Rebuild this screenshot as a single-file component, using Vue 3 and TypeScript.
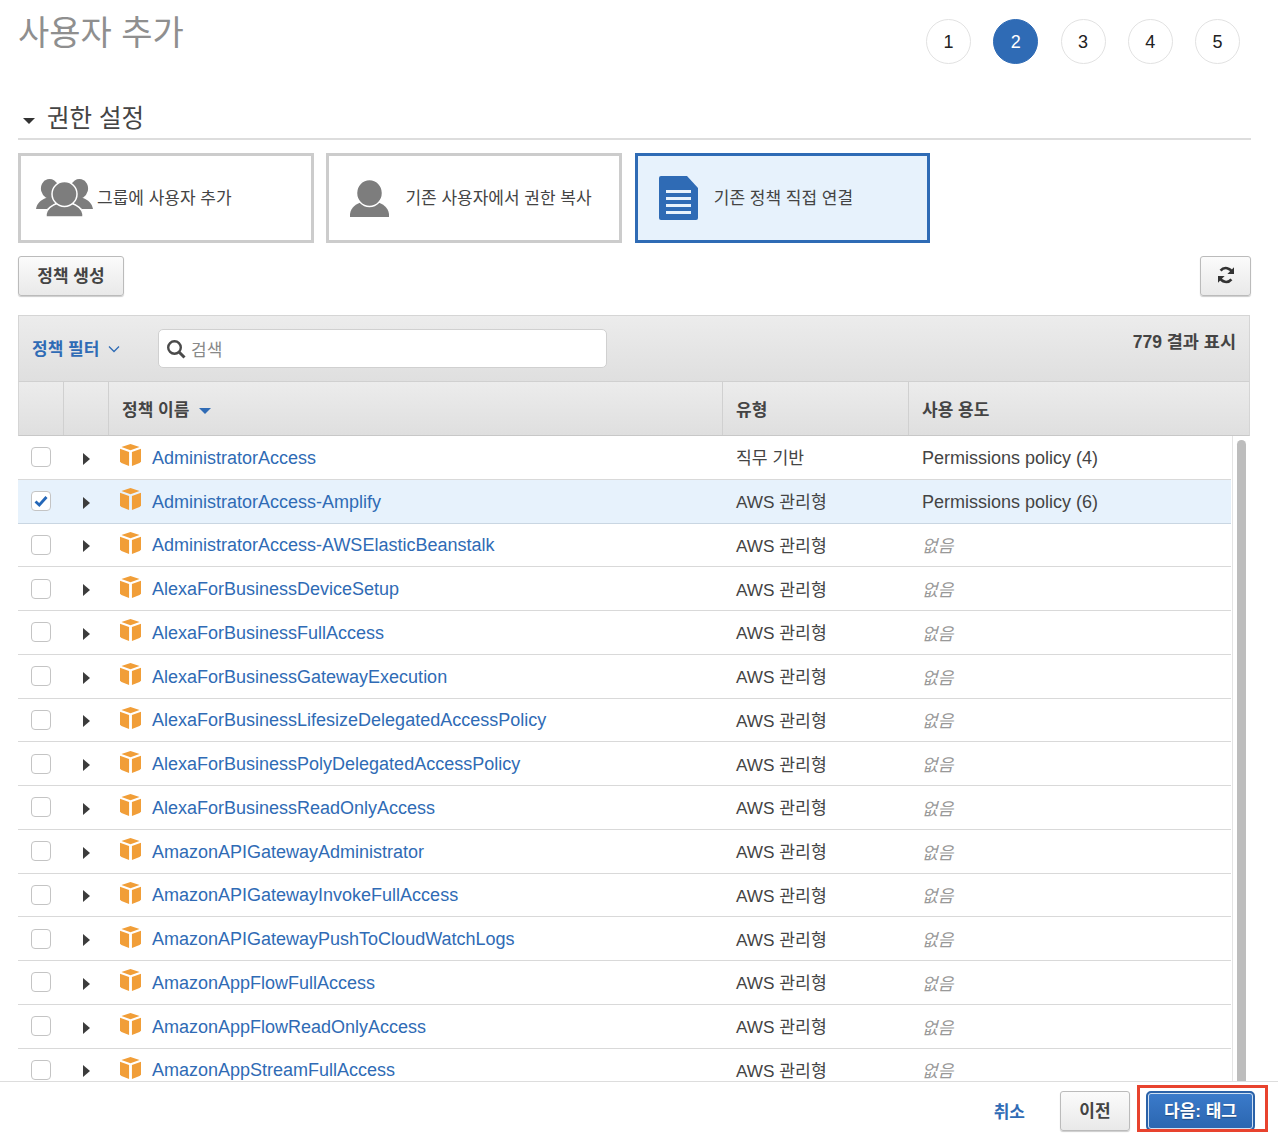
<template>
  <div class="page">
    <div class="top">
      <h1 class="title">사용자 추가</h1>
      <div class="steps">
        <div v-for="n in 5" :key="n" class="step" :class="{ active: n === 2 }">{{ n }}</div>
      </div>
    </div>

    <div class="section-head">
      <span class="caret"></span>
      <span>권한 설정</span>
    </div>

    <div class="cards">
      <div class="card">
        <svg class="icon-group" viewBox="0 0 57 38" width="57" height="38">
          <g fill="#7d7d7d">
            <ellipse cx="14" cy="10" rx="9" ry="10" transform="rotate(-15 14 10)" />
            <ellipse cx="43" cy="10" rx="9" ry="10" transform="rotate(15 43 10)" />
            <path d="M0 30c1-6 5-9 10-11h9v8c-4 1-7 2-8 3z" />
            <path d="M57 30c-1-6-5-9-10-11h-9v8c4 1 7 2 8 3z" />
          </g>
          <g fill="#7d7d7d" stroke="#fff" stroke-width="1.5">
            <path d="M10 38c0-1 0-2 0-3 1-6 6-9 12-11h13c6 2 11 5 12 11 0 1 0 2 0 3z" />
            <ellipse cx="28.5" cy="15" rx="12.5" ry="12.500" />
          </g>
        </svg>
        <span class="card-label tight">그룹에 사용자 추가</span>
      </div>
      <div class="card">
        <svg class="icon-user" viewBox="0 0 39 37" width="39" height="37">
          <path d="M0 37v-3c1-7 6-10 12-12h15c6 2 11 5 12 12v3z" fill="#7d7d7d" />
          <ellipse cx="19.500" cy="13" rx="13" ry="13.500" fill="#7d7d7d" stroke="#fff" stroke-width="1.500" />
        </svg>
        <span class="card-label">기존 사용자에서 권한 복사</span>
      </div>
      <div class="card selected">
        <svg class="icon-doc" viewBox="0 0 39 44" width="39" height="44">
          <path d="M2 0h26l11 12v30a2 2 0 0 1-2 2H2a2 2 0 0 1-2-2V2a2 2 0 0 1 2-2z" fill="#2f6bb5" />
          <g fill="#e8f2fc">
            <rect x="7" y="14" width="25" height="3" />
            <rect x="7" y="21" width="25" height="3" />
            <rect x="7" y="28" width="25" height="3" />
            <rect x="7" y="35" width="25" height="3" />
          </g>
        </svg>
        <span class="card-label">기존 정책 직접 연결</span>
      </div>
    </div>

    <div class="actions">
      <button class="btn create">정책 생성</button>
      <button class="btn refresh" aria-label="새로 고침">
        <svg viewBox="0 0 20 20" width="20" height="20">
          <path d="M16.300 7.600A6.800 6.800 0 0 0 4.600 5.600" fill="none" stroke="#333" stroke-width="2.600" />
          <path d="M18 2.300V9h-6.600z" fill="#333" />
          <path d="M3.700 12.400a6.800 6.800 0 0 0 11.700 2" fill="none" stroke="#333" stroke-width="2.600" />
          <path d="M2 17.700V11h6.600z" fill="#333" />
        </svg>
      </button>
    </div>

    <div class="table">
      <div class="toolbar">
        <div class="filter">
          <span>정책 필터</span>
          <svg viewBox="0 0 12 8" width="12" height="8">
            <path d="M1 1.500l5 5 5-5" fill="none" stroke="#2f6bb5" stroke-width="1.300" />
          </svg>
        </div>
        <div class="search">
          <svg viewBox="0 0 20 20" width="20" height="20">
            <circle cx="8.500" cy="8.500" r="6.300" fill="none" stroke="#4a4a4a" stroke-width="2.400" />
            <path d="M13 13l5.500 5.500" stroke="#4a4a4a" stroke-width="3" />
          </svg>
          <span>검색</span>
        </div>
        <div class="count">779 결과 표시</div>
      </div>

      <div class="head">
        <div class="cell c-check"></div>
        <div class="cell c-arrow"></div>
        <div class="cell c-name">정책 이름<span class="sort"></span></div>
        <div class="cell c-type">유형</div>
        <div class="cell c-use">사용 용도</div>
      </div>

      <div class="rows">
        <div v-for="row in rows" :key="row.name" class="row" :class="{ picked: row.checked }">
          <div class="c-check">
            <span class="box">
              <svg v-if="row.checked" viewBox="0 0 16 16" width="16" height="16">
                <path d="M2.500 8.500l3.800 3.500 7.200-8" fill="none" stroke="#2467b8" stroke-width="2.800" />
              </svg>
            </span>
          </div>
          <div class="c-arrow"><span class="arrow"></span></div>
          <div class="c-name">
            <svg class="cube" viewBox="0 0 22 23" width="21" height="22">
              <path d="M11 0l9.500 3.200L11 6.500 1.500 3.200z" fill="#f19e38" />
              <path d="M0 5l9.500 3.300V23L1.500 20 0 18.500z" fill="#f19e38" />
              <path d="M22 5l-9.500 3.300V23l8-3 1.500-1.500z" fill="#f19e38" />
            </svg>
            <a class="link">{{ row.name }}</a>
          </div>
          <div class="c-type">{{ row.type }}</div>
          <div class="c-use" :class="{ none: !row.use }">{{ row.use || '없음' }}</div>
        </div>
        <div class="scroll"><div class="thumb"></div></div>
      </div>
    </div>

    <div class="footer">
      <a class="cancel">취소</a>
      <button class="btn prev">이전</button>
      <div class="next-mark">
        <button class="btn next">다음: 태그</button>
      </div>
    </div>
  </div>
</template>

<script setup lang="ts">
interface PolicyRow {
  name: string
  type: string
  use: string
  checked?: boolean
}

const managed = 'AWS 관리형'

const rows: PolicyRow[] = [
  { name: 'AdministratorAccess', type: '직무 기반', use: 'Permissions policy (4)' },
  { name: 'AdministratorAccess-Amplify', type: managed, use: 'Permissions policy (6)', checked: true },
  { name: 'AdministratorAccess-AWSElasticBeanstalk', type: managed, use: '' },
  { name: 'AlexaForBusinessDeviceSetup', type: managed, use: '' },
  { name: 'AlexaForBusinessFullAccess', type: managed, use: '' },
  { name: 'AlexaForBusinessGatewayExecution', type: managed, use: '' },
  { name: 'AlexaForBusinessLifesizeDelegatedAccessPolicy', type: managed, use: '' },
  { name: 'AlexaForBusinessPolyDelegatedAccessPolicy', type: managed, use: '' },
  { name: 'AlexaForBusinessReadOnlyAccess', type: managed, use: '' },
  { name: 'AmazonAPIGatewayAdministrator', type: managed, use: '' },
  { name: 'AmazonAPIGatewayInvokeFullAccess', type: managed, use: '' },
  { name: 'AmazonAPIGatewayPushToCloudWatchLogs', type: managed, use: '' },
  { name: 'AmazonAppFlowFullAccess', type: managed, use: '' },
  { name: 'AmazonAppFlowReadOnlyAccess', type: managed, use: '' },
  { name: 'AmazonAppStreamFullAccess', type: managed, use: '' }
]
</script>

<style>
html,
body {
  margin: 0;
  background: #fff;
}
</style>

<style scoped>
.page {
  height: 1146px;
  box-sizing: border-box;
  padding: 0 27px 0 18px;
  display: flex;
  flex-direction: column;
  overflow: hidden;
  font-family: "Liberation Sans", "Noto Sans CJK KR", sans-serif;
  color: #444;
}

.top {
  display: flex;
  flex: none;
  justify-content: space-between;
  height: 103px;
}

.title {
  margin: 11px 0 0;
  font-size: 34px;
  line-height: 44px;
  font-weight: 400;
  color: #8f8f8f;
}

.steps {
  display: flex;
  gap: 22.250px;
  margin: 19px 11px 0 0;
}

.step {
  width: 45px;
  height: 45px;
  box-sizing: border-box;
  padding-top: 2px;
  border: 1px solid #e2e2e2;
  border-radius: 50%;
  display: flex;
  align-items: center;
  justify-content: center;
  font-size: 18px;
  color: #222;
}

.step.active {
  background: #2f6bb5;
  border-color: #2f6bb5;
  color: #fff;
}

.section-head {
  flex: none;
  border-bottom: 2px solid #ddd;
  display: flex;
  align-items: center;
  gap: 12px;
  padding: 0 0 8px 5px;
  height: 27px;
  font-size: 24.500px;
  color: #444;
}

.caret {
  width: 0;
  height: 0;
  margin-top: 8px;
  border-left: 6px solid transparent;
  border-right: 6px solid transparent;
  border-top: 6px solid #333;
}

.cards {
  display: flex;
  flex: none;
  gap: 12.900px;
  margin-top: 13px;
}

.card {
  width: 295.500px;
  height: 90px;
  box-sizing: border-box;
  border: 3px solid #ccc;
  display: flex;
  align-items: center;
  font-size: 17px;
  color: #444;
}

.card:nth-child(1) {
  padding-left: 15px;
}

.card:nth-child(2) {
  padding-left: 21px;
}

.card:nth-child(3) {
  padding-left: 21px;
  background: #e7f2fc;
  border-color: #2f6bb5;
}

.card-label {
  margin-left: 16px;
  padding-bottom: 3px;
}

.card-label.tight {
  margin-left: 4px;
}

.actions {
  display: flex;
  flex: none;
  justify-content: space-between;
  margin-top: 13px;
}

.btn {
  font-family: inherit;
  font-size: 17px;
  font-weight: 700;
  color: #444;
  height: 40px;
  padding: 0 0 3px;
  border: 1px solid #bbb;
  border-radius: 3px;
  background: linear-gradient(#fbfbfb, #e9e9e9);
  box-shadow: 0 1px 1px rgba(0, 0, 0, 0.2);
}

.create {
  width: 106px;
}

.refresh {
  width: 51px;
  display: flex;
  align-items: center;
  justify-content: center;
}

.table {
  margin-top: 19px;
  margin-right: 1px;
  flex: none;
  display: flex;
  flex-direction: column;
}

.toolbar {
  flex: none;
  height: 67px;
  box-sizing: border-box;
  display: flex;
  border: 1px solid #d5d5d5;
  border-bottom: 1px solid #d0d0d0;
  background: linear-gradient(#ececec, #dfdfdf);
  padding: 13px 13px 0 13px;
}

.filter {
  width: 126px;
  height: 38px;
  box-sizing: border-box;
  padding-bottom: 2px;
  display: flex;
  align-items: center;
  gap: 9px;
  font-size: 17px;
  font-weight: 700;
  color: #2f6bb5;
}

.filter svg {
  margin-top: 4px;
}

.search {
  width: 449px;
  height: 39px;
  box-sizing: border-box;
  background: #fff;
  border: 1px solid #d0d0d0;
  border-radius: 5px;
  display: flex;
  align-items: center;
  gap: 5px;
  padding-left: 7px;
  font-size: 17px;
  color: #888;
}

.count {
  margin-left: auto;
  font-size: 17.500px;
  font-weight: 700;
  line-height: 26px;
  color: #444;
}

.head {
  flex: none;
  height: 54px;
  box-sizing: border-box;
  display: flex;
  border: 1px solid #d5d5d5;
  border-top: 0;
  border-bottom: 1px solid #c8c8c8;
  background: linear-gradient(#ececec, #dfdfdf);
  font-size: 17px;
  font-weight: 700;
  color: #444;
}

.cell {
  display: flex;
  align-items: center;
  border-right: 1px solid #d0d0d0;
  box-sizing: border-box;
}

.cell:last-child {
  border-right: 0;
}

.c-check {
  width: 45px;
  flex: none;
  box-sizing: border-box;
}

.c-arrow {
  width: 45px;
  flex: none;
  box-sizing: border-box;
}

.c-name {
  width: 614px;
  flex: none;
  box-sizing: border-box;
  padding-left: 13px;
}

.c-type {
  width: 186px;
  flex: none;
  box-sizing: border-box;
  padding-left: 13px;
}

.c-use {
  flex: 1;
  box-sizing: border-box;
  padding-left: 13px;
}

.sort {
  width: 0;
  height: 0;
  margin: 4px 0 0 10px;
  border-left: 6.500px solid transparent;
  border-right: 6.500px solid transparent;
  border-top: 6.500px solid #2f6bb5;
}

.rows {
  position: relative;
  flex: none;
  height: 645px;
  overflow: hidden;
  padding-right: 19px;
}

.row {
  height: 43.750px;
  box-sizing: border-box;
  display: flex;
  align-items: center;
  border-bottom: 1px solid #d9d9d9;
  font-size: 18px;
  color: #444;
}

.row.picked {
  background: #e7f2fc;
  border-bottom-color: #c9d6e2;
}

.row .c-check {
  padding-left: 13px;
}

.box {
  display: flex;
  align-items: center;
  justify-content: center;
  width: 20px;
  height: 20px;
  box-sizing: border-box;
  background: #fff;
  border: 1px solid #c4c4c4;
  border-radius: 4px;
}

.row .c-arrow {
  padding-left: 20px;
  padding-top: 3px;
}

.arrow {
  display: block;
  width: 0;
  height: 0;
  border-top: 6px solid transparent;
  border-bottom: 6px solid transparent;
  border-left: 7px solid #3c3c3c;
}

.row .c-name {
  display: flex;
  align-items: center;
  padding-left: 12px;
}

.cube {
  margin-top: -4px;
  flex: none;
}

.link {
  margin-left: 11px;
  padding-top: 2px;
  color: #2f6bb5;
}

.row .c-type {
  font-size: 17.200px;
  padding-left: 14px;
  padding-bottom: 1px;
}

.row .c-use {
  padding-left: 14px;
  padding-top: 2px;
}

.row .none {
  font-style: italic;
  font-size: 17px;
  padding-top: 0;
  color: #999;
}

.scroll {
  position: absolute;
  top: 0;
  right: 0;
  bottom: 0;
  width: 18px;
  box-sizing: border-box;
  border-left: 1px solid #e4e4e4;
  padding: 4px 4px 0;
}

.thumb {
  height: 100%;
  border-radius: 5px 5px 0 0;
  background: #bdbdbd;
}

.footer {
  flex: 1;
  margin: 0 -27px 0 -18px;
  border-top: 1px solid #ddd;
  background: #fff;
  display: flex;
  align-items: flex-start;
  justify-content: flex-end;
  padding: 9px 23px 0 0;
  position: relative;
}

.cancel {
  margin: 7px 35px 0 0;
  font-size: 17px;
  font-weight: 700;
  color: #2f6bb5;
}

.prev {
  width: 70px;
}

.next-mark {
  margin-left: 16px;
}

.next {
  width: 109px;
  color: #fff;
  border: 2px solid #2b62a8;
  border-radius: 5px;
  background: linear-gradient(#3b7bcb, #2b66b0);
  box-shadow: inset 0 0 0 1px #cfe0f3;
  text-shadow: 0 1px 1px rgba(0, 0, 0, 0.3);
}

.next-mark::after {
  content: "";
  position: absolute;
  left: 1137px;
  top: 3px;
  width: 131px;
  height: 47px;
  box-sizing: border-box;
  border: 3px solid #e8432e;
}
</style>
